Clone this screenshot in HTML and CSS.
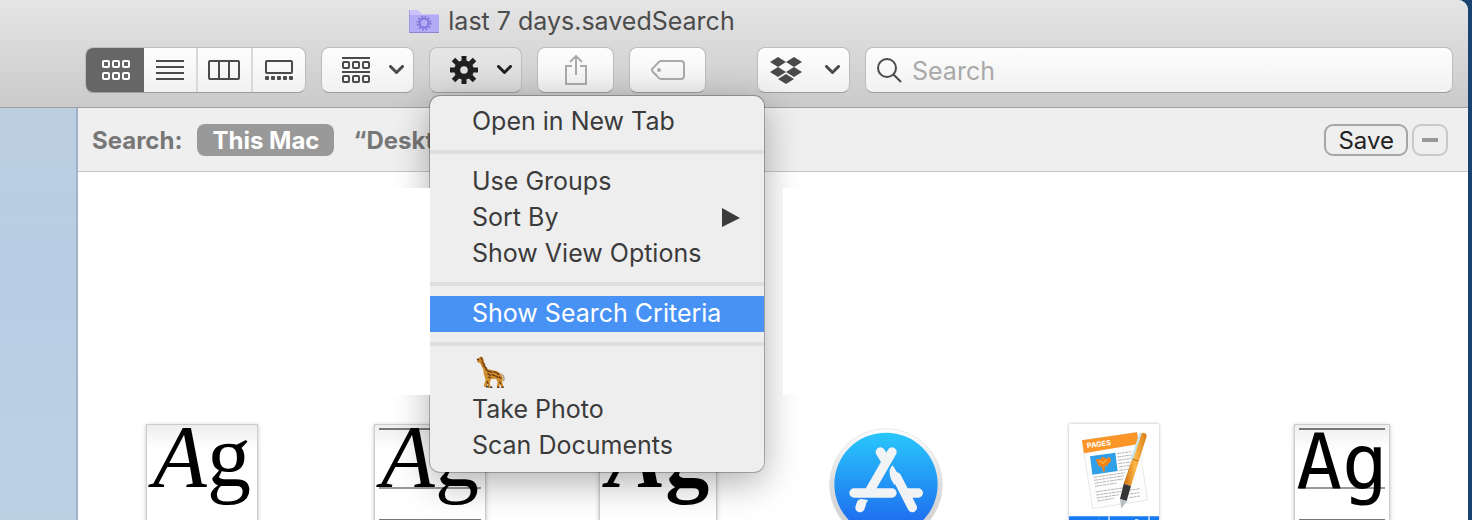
FILE: index.html
```html
<!DOCTYPE html>
<html lang="en">
<head>
  <meta charset="UTF-8">
  <meta name="viewport" content="width=device-width, initial-scale=1.0">
  <title>last 7 days.savedSearch</title>
  <link rel="stylesheet" href="styles.css">
</head>
<body>
  <div class="window">
    <header class="titlebar">
      <div class="title">
        <svg width="30" height="25" viewBox="0 0 30 25">
          <path d="M0 24V1h9l4 4h17v19z" fill="#c9c2fb"/>
          <path d="M0 6h30v17H0z" fill="#b5abf4"/>
          <path d="M0 23.500h30" stroke="#8f84d4"/>
          <path d="M.5 1v23" stroke="#a299e4"/>
          <circle cx="15" cy="14" r="4.500" fill="none" stroke="#8275db" stroke-width="2"/>
          <circle cx="15" cy="14" r="6.500" fill="none" stroke="#8275db" stroke-width="2" stroke-dasharray="1.700 1.700"/>
        </svg>
        <span>last 7 days.savedSearch</span>
      </div>

      <div class="toolbar">
        <div class="segments">
          <button class="segment active" aria-label="Icon view">
            <svg width="28" height="20" fill="none" stroke="#fff" stroke-width="2">
              <rect x="1" y="1" width="6" height="6" rx="1"/><rect x="11" y="1" width="6" height="6" rx="1"/><rect x="21" y="1" width="6" height="6" rx="1"/>
              <rect x="1" y="13" width="6" height="6" rx="1"/><rect x="11" y="13" width="6" height="6" rx="1"/><rect x="21" y="13" width="6" height="6" rx="1"/>
            </svg>
          </button>
          <button class="segment" aria-label="List view">
            <svg width="28" height="20" stroke="#4a4a4a" stroke-width="2"><path d="M0 1h28M0 7h28M0 13h28M0 19h28"/></svg>
          </button>
          <button class="segment" aria-label="Column view">
            <svg width="32" height="20" fill="none" stroke="#4a4a4a" stroke-width="2"><rect x="1" y="1" width="30" height="18" rx="1"/><path d="M11 1v18M21 1v18"/></svg>
          </button>
          <button class="segment" aria-label="Gallery view">
            <svg width="28" height="20" fill="#4a4a4a"><rect x="1" y="1" width="26" height="12" rx="1" fill="none" stroke="#4a4a4a" stroke-width="2"/><rect y="16" width="4" height="4" rx="1"/><rect x="6" y="16" width="4" height="4" rx="1"/><rect x="12" y="16" width="4" height="4" rx="1"/><rect x="18" y="16" width="4" height="4" rx="1"/><rect x="24" y="16" width="4" height="4" rx="1"/></svg>
          </button>
        </div>

        <button class="tool dropdown" aria-label="Group items">
          <svg width="28" height="26" fill="none" stroke="#4a4a4a" stroke-width="2">
            <path d="M0 1h28M0 15h28"/>
            <rect x="1" y="5" width="6" height="6" rx="1"/><rect x="11" y="5" width="6" height="6" rx="1"/><rect x="21" y="5" width="6" height="6" rx="1"/>
            <rect x="1" y="19" width="6" height="6" rx="1"/><rect x="11" y="19" width="6" height="6" rx="1"/><rect x="21" y="19" width="6" height="6" rx="1"/>
          </svg>
          <svg class="chevron" width="15" height="10"><path d="M1.500 1.500l6 6 6-6"/></svg>
        </button>

        <div class="action">
          <button class="tool dropdown pressed" aria-label="Action" aria-expanded="true">
            <svg width="28" height="28" viewBox="-14 -14 28 28" fill="none" stroke="#202020">
              <circle r="6.800" stroke-width="6"/>
              <path stroke-width="5" stroke-linecap="butt" d="M0-14v6M0 14V8M-14 0h6M14 0H8M-10.500-10.500l4 4M10.500 10.500l-4-4M-10.500 10.500l4-4M10.500-10.500l-4 4"/>
            </svg>
            <svg class="chevron" width="15" height="10"><path d="M1.500 1.500l6 6 6-6"/></svg>
          </button>

          <ul class="menu">
            <li><button>Open in New Tab</button></li>
            <li class="separator"></li>
            <li><button>Use Groups</button></li>
            <li><button>Sort By <svg width="18" height="20"><path d="M0 1l18 10L0 20z" fill="#3b3b3b"/></svg></button></li>
            <li><button>Show View Options</button></li>
            <li class="separator"></li>
            <li><button class="selected">Show Search Criteria</button></li>
            <li class="separator"></li>
            <li>
              <button aria-label="Giraffe">
                <svg class="giraffe" width="32" height="32" viewBox="0 0 96 96">
                  <path d="M10 9l8-6 7 0 3 5 5 20 9 12 15 3c9 1 18 4 23 11l6 10-1 16 4 14h-7l-4-15-2 16h-8l3-18-5-9-15 1-4 11 3 15h-8l-2-14-3 13-8-3 6-20-5-15-2-15-10-20-8-2z" fill="#ce8b2c"/>
                  <path d="M82 53c7 5 10 11 7 22" fill="none" stroke="#92714b" stroke-width="3"/>
                  <path d="M21 4l4 9M24 18l8 8M29 29l8 8M35 39l9 8M46 45l7 4M58 47l8 3M69 52l6 4M42 53l7 5M54 56l7 3M65 60l7 4M44 63l5 2M76 63l5 4M39 77l3 5M77 78l3 6" stroke="#6c3b13" stroke-width="4" fill="none" stroke-linecap="round"/>
                  <path d="M9 10l6 2M36 92h8M48 94h7M70 94h6M82 94h7" stroke="#4c3625" stroke-width="5"/>
                </svg>
              </button>
            </li>
            <li><button>Take Photo</button></li>
            <li><button>Scan Documents</button></li>
          </ul>
        </div>

        <button class="tool" aria-label="Share" disabled>
          <svg width="22" height="30" fill="none" stroke="#aaa" stroke-width="2"><path d="M7 11H1v18h20V11h-6M11 20V2M5 7l6-6 6 6"/></svg>
        </button>
        <button class="tool" aria-label="Edit tags" disabled>
          <svg width="34" height="20" fill="none" stroke="#aaa" stroke-width="2"><path d="M10 1h20q3 0 3 3v12q0 3-3 3H10q-2 0-4-3L2 12q-2-2 0-4l4-4q2-3 4-3z"/><circle cx="8" cy="10" r="2" fill="#aaa" stroke="none"/></svg>
        </button>

        <button class="tool dropdown dropbox" aria-label="Dropbox">
          <svg width="32" height="27" fill="#4a4a4a"><path d="M8 0l8 5-8 5-8-5zM24 0l8 5-8 5-8-5zM8 10l8 5-8 5-8-5zM24 10l8 5-8 5-8-5zM16 17l8 5-8 5-8-5z"/></svg>
          <svg class="chevron" width="15" height="10"><path d="M1.500 1.500l6 6 6-6"/></svg>
        </button>

        <label class="search">
          <svg width="26" height="26" fill="none" stroke="#4a4a4a" stroke-width="2"><circle cx="10" cy="11" r="9"/><path d="M16 17l8 8"/></svg>
          <input type="search" placeholder="Search" aria-label="Search">
        </label>
      </div>
    </header>

    <div class="body">
      <aside class="sidebar"></aside>
      <main class="content">
        <div class="scope-bar">
          <span class="scope-label">Search:</span>
          <button class="scope active">This Mac</button>
          <button class="scope">“Desktop”</button>
          <button class="save">Save</button>
          <button class="remove" aria-label="Remove"><svg width="16" height="4"><path d="M0 2h16" stroke="#999" stroke-width="4"/></svg></button>
        </div>

        <div class="files">
          <div class="file font serif">A<span>g</span></div>
          <div class="file font serif ruled">A<span>g</span></div>
          <div class="file font serif bold">A<span>g</span></div>
          <div class="file">
            <svg width="114" height="114" viewBox="87 83 342 342">
              <defs>
                <linearGradient id="ring" x2="0" y2="1"><stop stop-color="#fff"/><stop offset=".5" stop-color="#ddd"/><stop offset="1" stop-color="#ccc"/></linearGradient>
                <linearGradient id="sky" x2="0" y2="1"><stop stop-color="#29c7fb"/><stop offset="1" stop-color="#1d61ee"/></linearGradient>
              </defs>
              <circle cx="258" cy="254" r="169" fill="url(#ring)" stroke="#ddd" stroke-width="2"/>
              <circle cx="258" cy="252" r="155" fill="url(#sky)"/>
              <g fill="none" stroke="#f2f3f5" stroke-width="28" stroke-linecap="round">
                <path d="M241 155l14 23M276 155l-66 115M162 278h114M322 278h33M184 310l-4 12M290 230l47 92"/>
              </g>
              <path d="M269 218q-2-12 9-23l24 39-18 20q-15-19-15-36z" fill="#f2f3f5"/>
              <path d="M172 304q16-10 32-4l-9 15-24-2z" fill="#f2f3f5"/>
            </svg>
          </div>
          <div class="file pages">
            <svg width="90" height="122" viewBox="57 38 270 366">
              <defs>
                <linearGradient id="pen" x2="1" y2="0"><stop stop-color="#c96d0d"/><stop offset=".5" stop-color="#ffb847"/><stop offset="1" stop-color="#d67c17"/></linearGradient>
              </defs>
              <path d="M96 87l165-24 32 203-165 26z" fill="#fdfdfd" stroke="#ddd" stroke-width="2"/>
              <path d="M96 87l165-24 5 35-164 28z" fill="#fb9527"/>
              <text x="112" y="111" transform="rotate(-8 112 111)" class="pages-title">PAGES</text>
              <path d="M120 135l76-11 7 55-76 11z" fill="#2f9fe9"/>
              <path d="M137 143l14 1 7-8 10 6 12-5 3 12-11 13-8 4v15h-5l-3-14-11-4z" fill="#f58216"/>
              <path d="M148 148l11 8 11-11" fill="none" stroke="#ffb43d" stroke-width="4"/>
              <g stroke="#b5b5b5" stroke-width="3" stroke-dasharray="12 2 7 2">
                <path d="M201 127l43-6M202 137l43-6M204 147l41-6M205 157l37-5M207 167l33-5M208 177l30-4M131 198l94-14M132 207l91-14M134 216l85-13M135 225l65-10M137 242l80-12M139 251l74-11M140 260l68-10M142 269l50-8M236 237l33-5M239 248l29-4M238 259l32-5"/>
              </g>
              <path d="M271 70q4-9 14-4 7 3 4 12l-46 146-22-7z" fill="url(#pen)"/>
              <path d="M271 68l-25 74" stroke="#c5e4ef" stroke-width="7" stroke-linecap="round"/>
              <path d="M248 143l16 6" stroke="#b46513" stroke-width="3"/>
              <path d="M221 217l22 7-13 45-20-6z" fill="#363638"/>
              <path d="M210 263l20 6-16 23z" fill="#b7bfc5"/>
              <path d="M57 315h270v89H57z" fill="#167bf2"/>
              <path d="M177 315v89M297 315v89" stroke="#e9f1fa" stroke-width="4"/>
              <path d="M146 325v6M255 326h10" stroke="#fff" stroke-width="4"/>
            </svg>
          </div>
          <div class="file font mono ruled">Ag</div>
        </div>
      </main>
    </div>
  </div>
</body>
</html>
```
FILE: styles.css
```css
* { box-sizing: border-box; }
body { margin: 0; background: #1b4372; font-family: Inter, "Liberation Sans", sans-serif; font-size: 25px; color: #3b3b3b; }
button, input { font: inherit; color: inherit; margin: 0; padding: 0; border: 0; background: none; }
svg { display: block; flex: none; }

.window { height: 100vh; margin-right: 4px; overflow: hidden; display: flex; flex-direction: column; background: #fff; border-top-right-radius: 10px; }

/* title bar */
.titlebar { position: relative; z-index: 1; background: linear-gradient(#e5e5e5, #cacaca); border-bottom: 1px solid #a0a0a0; padding: 0 15px 14px 85px; }
.title { display: flex; align-items: center; justify-content: center; gap: 9px; height: 42px; padding-right: 309px; margin-bottom: 5px; margin-left: -85px; color: #4c4c4c; }
.toolbar { display: flex; gap: 15px; height: 46px; }

.segments, .tool, .search { border: 1px solid #bcbcbc; border-bottom-color: #9d9d9d; border-radius: 8px; background: linear-gradient(#fdfdfd, #f1f1f1); }
.segments { display: flex; overflow: hidden; width: 221px; }
.segment { flex: 1; display: flex; align-items: center; justify-content: center; }
.segment + .segment + .segment { border-left: 2px solid #d9d9d9; }
.segment.active { flex: 0 0 58px; padding-left: 2px; background: #666; }
.tool { display: flex; align-items: center; justify-content: center; width: 77px; flex: none; }
.tool.dropdown { width: 93px; justify-content: flex-start; padding-left: 20px; gap: 19px; }
.tool.pressed { background: linear-gradient(#e6e6e6, #dadada); }
.tool.dropbox { margin-left: 36px; padding-left: 12px; gap: 23px; }
.chevron { fill: none; stroke: #4a4a4a; stroke-width: 3; stroke-linecap: round; stroke-linejoin: round; }
.pressed .chevron { stroke: #202020; }
.search { flex: 1; display: flex; align-items: center; gap: 9px; padding: 0 11px; }
.search input { flex: 1; min-width: 0; padding-top: 2px; outline: none; }
.search input::placeholder { color: #a9a9a9; opacity: 1; }

/* action menu */
.action { position: relative; display: flex; }
.menu { position: absolute; top: 49px; left: 1px; width: 334px; margin: 0; padding: 8px 0; list-style: none; background: #eee; border-radius: 10px; box-shadow: 0 0 0 1px rgba(0, 0, 0, .25), 0 10px 36px rgba(0, 0, 0, .32); }
.menu button { display: flex; align-items: center; justify-content: space-between; width: 100%; height: 36px; padding: 0 24px 2px 42px; text-align: left; white-space: nowrap; }
.menu .selected { background: #4892f5; color: #fff; }
.menu .giraffe { margin-left: 2px; margin-bottom: 3px; }
.separator { height: 4px; margin: 10px 0; background: #dedede; }
.menu::before, .menu::after { content: ""; position: absolute; top: 92px; height: 207px; width: 50px; background: #fff; }
.menu::before { right: 100%; }
.menu::after { left: calc(100% + 19px); }

/* window body */
.body { flex: 1; display: flex; min-height: 0; }
.sidebar { width: 78px; flex: none; background: linear-gradient(#bccfe1, #b8cce4 40%, #bdd1e5); border-right: 2px solid #9fb2c9; }
.content { flex: 1; min-width: 0; }
.scope-bar { display: flex; align-items: center; height: 64px; padding: 0 20px 0 14px; background: #efefef; border-bottom: 1px solid #c6c6c6; font-size: 24px; font-weight: 700; color: #777; }
.scope { height: 32px; padding: 2px 15px 0; border-radius: 8px; }
.scope-label { margin-right: 15px; padding-top: 2px; }
.scope.active { background: #999; color: #fff; margin-right: 4px; }
.save, .remove { height: 32px; border: 2px solid #a6a6a6; border-radius: 9px; }
.save { margin-left: auto; padding: 2px 12px 0; font-weight: 400; color: #222; line-height: 26px; }
.remove { width: 36px; margin-left: 4px; border-color: #c9c9c9; display: flex; align-items: center; justify-content: center; }

.files { display: grid; grid-template-columns: repeat(6, 1fr); justify-items: center; align-items: center; padding: 252px 12px 0 10px; }
.file.font { width: 112px; height: 122px; overflow: hidden; border: 1px solid #ccc; box-shadow: 0 1px 4px rgba(0, 0, 0, .25); background: linear-gradient(#eee, #fff 24px); color: #000; text-align: center; white-space: nowrap; }
.file.serif { font: italic 88px/64px "Liberation Serif", serif; }
.file.serif span { font-style: normal; }
.file.bold { width: 118px; font-weight: bold; }
.file.mono { width: 96px; font: 76px/76px "DejaVu Sans Mono", monospace; }
.file.ruled { background: linear-gradient(#777, #777) 50% 3px / calc(100% - 8px) 2px no-repeat, linear-gradient(#999, #999) 50% 62px / calc(100% - 8px) 2px no-repeat, linear-gradient(#777, #777) 50% 94px / calc(100% - 8px) 2px no-repeat, linear-gradient(#eee, #fff 24px); }
.file.pages { background: #fff; box-shadow: 0 0 3px rgba(0, 0, 0, .3); }
.pages-title { font: 700 22px Inter, sans-serif; fill: #fff; }
```
